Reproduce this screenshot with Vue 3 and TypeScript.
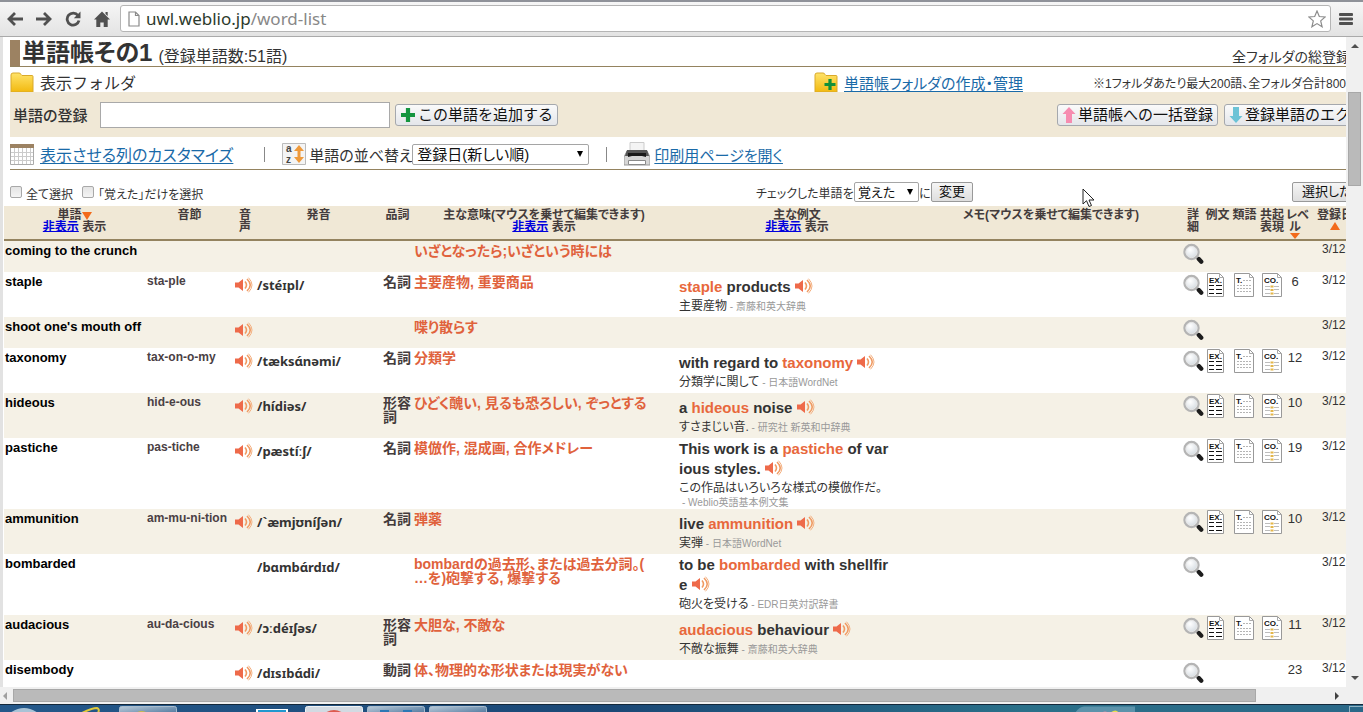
<script setup lang="ts">
import { ref } from 'vue'

interface Part { t: string; hit?: boolean }
interface Entry {
  word: string
  syllables?: string
  sound?: boolean
  pron?: string
  pos?: string[]
  meaning: string[]
  example?: Part[][]
  translation?: string
  source?: string
  sourceBelow?: boolean
  docs?: boolean
  level?: number
}

const date = '3/12'
const newWord = ref('')
const sortOrder = ref('登録日(新しい順)')
const mark = ref('覚えた')

const entries: Entry[] = [
  { word: 'coming to the crunch', meaning: ['いざとなったら;いざという時には'] },
  {
    word: 'staple', syllables: 'sta‐ple', sound: true, pron: '/stéɪpl/', pos: ['名詞'],
    meaning: ['主要産物, 重要商品'],
    example: [[{ t: 'staple', hit: true }, { t: ' products ' }]],
    translation: '主要産物', source: '斎藤和英大辞典', docs: true, level: 6,
  },
  { word: "shoot one's mouth off", sound: true, meaning: ['喋り散らす'] },
  {
    word: 'taxonomy', syllables: 'tax‐on‐o‐my', sound: true, pron: '/tæksɑ́nəmi/', pos: ['名詞'],
    meaning: ['分類学'],
    example: [[{ t: 'with regard to ' }, { t: 'taxonomy', hit: true }, { t: ' ' }]],
    translation: '分類学に関して', source: '日本語WordNet', docs: true, level: 12,
  },
  {
    word: 'hideous', syllables: 'hid‐e‐ous', sound: true, pron: '/hídiəs/', pos: ['形容', '詞'],
    meaning: ['ひどく醜い, 見るも恐ろしい, ぞっとする'],
    example: [[{ t: 'a ' }, { t: 'hideous', hit: true }, { t: ' noise ' }]],
    translation: 'すさまじい音.', source: '研究社 新英和中辞典', docs: true, level: 10,
  },
  {
    word: 'pastiche', syllables: 'pas‐tiche', sound: true, pron: '/pæstíːʃ/', pos: ['名詞'],
    meaning: ['模倣作, 混成画, 合作メドレー'],
    example: [
      [{ t: 'This work is a ' }, { t: 'pastiche', hit: true }, { t: ' of var' }],
      [{ t: 'ious styles. ' }],
    ],
    translation: 'この作品はいろいろな様式の模倣作だ。', source: 'Weblio英語基本例文集', sourceBelow: true,
    docs: true, level: 19,
  },
  {
    word: 'ammunition', syllables: 'am‐mu‐ni‐tion', sound: true, pron: '/`æmjʊníʃən/', pos: ['名詞'],
    meaning: ['弾薬'],
    example: [[{ t: 'live ' }, { t: 'ammunition', hit: true }, { t: ' ' }]],
    translation: '実弾', source: '日本語WordNet', docs: true, level: 10,
  },
  {
    word: 'bombarded', pron: '/bɑmbɑ́rdɪd/',
    meaning: ['bombardの過去形、または過去分詞。(', '…を)砲撃する, 爆撃する'],
    example: [
      [{ t: 'to be ' }, { t: 'bombarded', hit: true }, { t: ' with shellfir' }],
      [{ t: 'e ' }],
    ],
    translation: '砲火を受ける', source: 'EDR日英対訳辞書',
  },
  {
    word: 'audacious', syllables: 'au‐da‐cious', sound: true, pron: '/ɔːdéɪʃəs/', pos: ['形容', '詞'],
    meaning: ['大胆な, 不敵な'],
    example: [[{ t: 'audacious', hit: true }, { t: ' behaviour ' }]],
    translation: '不敵な振舞', source: '斎藤和英大辞典', docs: true, level: 11,
  },
  {
    word: 'disembody', sound: true, pron: '/dɪsɪbɑ́di/', pos: ['動詞'],
    meaning: ['体、物理的な形状または現実がない'], level: 23,
  },
]
</script>

<template>
  <div class="window">
    <svg class="defs" width="0" height="0" aria-hidden="true">
      <defs>
        <radialGradient id="lens" cx="40%" cy="35%" r="65%">
          <stop offset="0" stop-color="#ffffff" />
          <stop offset="1" stop-color="#d3dae0" />
        </radialGradient>
        <linearGradient id="gold" x1="0" y1="0" x2="0" y2="1">
          <stop offset="0" stop-color="#ffe36a" />
          <stop offset="1" stop-color="#f2b90f" />
        </linearGradient>
        <linearGradient id="task" x1="0" y1="0" x2="1" y2="1">
          <stop offset="0" stop-color="#b9cad9" />
          <stop offset="1" stop-color="#416c95" />
        </linearGradient>
        <symbol id="speaker" viewBox="0 0 18 16">
          <path d="M0 5.500h3.500L8 2v12L3.500 10.500H0z" fill="#ee6a4a" />
          <path d="M10 4.500q3 3.500 0 7M12 2q6.500 6 0 12" fill="none" stroke="#f09a62" stroke-width="1.600" />
          <path d="M13.500 .7q7 7.300 0 14.600" fill="none" stroke="#f3b080" stroke-width="1" />
        </symbol>
      </defs>
    </svg>

    <header class="toolbar">
      <button class="nav" aria-label="戻る">
        <svg width="16" height="16" viewBox="0 0 16 16"><path d="M16 8H3M8 2 2 8l6 6" fill="none" stroke="#505050" stroke-width="2.800" /></svg>
      </button>
      <button class="nav" aria-label="進む">
        <svg width="16" height="16" viewBox="0 0 16 16"><path d="M0 8h13M8 2l6 6-6 6" fill="none" stroke="#505050" stroke-width="2.800" /></svg>
      </button>
      <button class="nav" aria-label="再読み込み">
        <svg width="16" height="16" viewBox="0 0 16 16"><path d="M13 4.500A6 6 0 1 0 14 9.500" fill="none" stroke="#505050" stroke-width="2.800" /><path d="M15.500.5v6.700H8.800z" fill="#505050" /></svg>
      </button>
      <button class="nav" aria-label="ホーム">
        <svg width="16" height="16" viewBox="0 0 16 16"><path d="M8 .5 16 8.500h-2.300V16H9.700v-4.500H6.300V16H2.300V8.500H0zM11.500 1h2.200v4l-2.200-2z" fill="#505050" /></svg>
      </button>
      <div class="omnibox">
        <svg width="14" height="16" viewBox="0 0 14 16"><path d="M2 1h6.500L12 4.500V15H2zM8.500 1v3.500H12" fill="#fff" stroke="#8a8a8a" stroke-width="1.200" /></svg>
        <div class="url" role="textbox" aria-label="アドレス" contenteditable="true"><span class="host">uwl.weblio.jp</span><span class="path">/word-list</span></div>
        <button class="star" aria-label="ブックマーク">
          <svg width="18" height="18" viewBox="0 0 18 18"><path d="M9 1l2.300 5.500 5.900.5-4.500 3.900 1.400 5.900L9 13.600l-5.100 3.200 1.400-5.900L.8 7l5.900-.5z" fill="#fff" stroke="#8c8c8c" stroke-width="1.200" /></svg>
        </button>
      </div>
      <button class="menu" aria-label="メニュー">
        <svg width="14" height="14" viewBox="0 0 14 14"><path d="M1 2.500h12M1 7h12M1 11.500h12" stroke="#505050" stroke-width="2.800" stroke-linecap="round" /></svg>
      </button>
    </header>

    <div class="viewport">
      <main class="page">
        <div class="top">
          <div class="title-row">
            <h1>単語帳その1</h1>
            <span class="count">(登録単語数:51語)</span>
            <span class="total">全フォルダの総登録</span>
          </div>

          <div class="folder-row">
            <svg class="folder" width="24" height="20" viewBox="0 0 24 20"><path d="M1 20V3q0-2 2-2h6q1.500 0 2 1.500L12 3.500h10q1 0 1 1V20z" fill="url(#gold)" stroke="#d9a92a" /></svg>
            <span class="folder-name">表示フォルダ</span>
            <span class="folder-admin">
              <svg class="folder" width="24" height="20" viewBox="0 0 24 20"><path d="M1 20V3q0-2 2-2h6q1.500 0 2 1.500L12 3.500h10q1 0 1 1V20z" fill="url(#gold)" stroke="#d9a92a" /><path d="M16 7v11M10.500 12.500h11" stroke="#12903a" stroke-width="3.200" /></svg>
              <a href="#">単語帳フォルダの作成・管理</a>
            </span>
            <span class="limit">※1フォルダあたり最大200語、全フォルダ合計800</span>
          </div>

          <form class="add-row" @submit.prevent>
            <label for="new-word">単語の登録</label>
            <input id="new-word" v-model="newWord" type="text" />
            <button class="btn" type="submit">
              <svg width="16" height="16" viewBox="0 0 16 16"><path d="M8 1v14M1 8h14" stroke="#14953f" stroke-width="4.200" /></svg>
              <span>この単語を追加する</span>
            </button>
            <button class="btn bulk" type="button">
              <svg width="14" height="18" viewBox="0 0 14 18"><path d="M7 1l6.500 7H10v9H4V8H.5z" fill="#f68cb0" /></svg>
              <span>単語帳への一括登録</span>
            </button>
            <div class="cut export">
              <button class="btn" type="button">
                <svg width="14" height="18" viewBox="0 0 14 18"><path d="M7 17l6.500-7H10V1H4v9H.5z" fill="#6cc3d6" /></svg>
                <span>登録単語のエク</span>
              </button>
            </div>
          </form>

          <div class="tool-row">
            <svg width="24" height="21" viewBox="0 0 24 21">
              <path d="M.5.5h23v20H.5z" fill="#fff" stroke="#aaa" />
              <path d="M0 0h24v4H0z" fill="#9c8262" />
              <path d="M4.500 4v16M8.500 4v16M12.500 4v16M16.500 4v16M20.500 4v16M1 8.500h22M1 12.500h22M1 16.500h22" stroke="#cbcbcb" />
            </svg>
            <a class="customize" href="#">表示させる列のカスタマイズ</a>
            <span class="bar"></span>
            <svg class="az" width="24" height="22" viewBox="0 0 24 22">
              <path d="M.5.5h23v21H.5z" fill="#f4f4f4" stroke="#bbb" />
              <text x="4" y="9" class="az-text">a</text>
              <text x="4" y="20" class="az-text">z</text>
              <path d="M17 2l5 6h-3.500v6H22l-5 6-5-6h3.500V8H12z" fill="#ee9a3c" />
            </svg>
            <label for="sort">単語の並べ替え</label>
            <span class="select sort">
              <select id="sort" v-model="sortOrder"><option>登録日(新しい順)</option></select>
              <svg width="8" height="7" viewBox="0 0 8 7"><path d="M1 0h6L4 6z" fill="#000" /></svg>
            </span>
            <span class="bar second"></span>
            <svg class="printer" width="26" height="24" viewBox="0 0 26 24">
              <path d="M6 .5h14V10H6z" fill="#f4f4f4" stroke="#ccc" />
              <path d="M3 9h20l3 6v8H0v-8z" fill="#d6d6d6" stroke="#999" />
              <path d="M3 8h20l2 6H1z" fill="#555" />
              <path d="M4 11h18v4l-4-1H8l-4 1z" fill="#1a1a1a" />
              <path d="M4.500 18.500h17v4h-17z" fill="#fff" stroke="#8a8a8a" />
            </svg>
            <a href="#">印刷用ページを開く</a>
          </div>

          <div class="check-row">
            <input id="all" type="checkbox" /><label for="all">全て選択</label>
            <input id="known" type="checkbox" /><label for="known">「覚えた」だけを選択</label>
            <div class="change">
              <label for="mark">チェックした単語を</label>
              <span class="select mark">
                <select id="mark" v-model="mark"><option>覚えた</option></select>
                <svg width="8" height="7" viewBox="0 0 8 7"><path d="M1 0h6L4 6z" fill="#000" /></svg>
              </span>
              <span class="ni">に</span>
              <button class="small-btn">変更</button>
            </div>
            <div class="cut chosen"><button class="small-btn">選択した</button></div>
          </div>
        </div>

        <table>
          <colgroup>
            <col class="c-word" /><col class="c-syl" /><col class="c-snd" /><col class="c-pron" /><col class="c-pos" />
            <col class="c-mean" /><col class="c-ex" /><col /><col class="c-det" /><col class="c-doc" /><col class="c-doc" />
            <col class="c-co" /><col class="c-lev" /><col class="c-date" />
          </colgroup>
          <thead>
            <tr>
              <th>単語<svg class="tri" width="10" height="8" viewBox="0 0 10 8"><path d="M0 0h10L5 8z" fill="#f26a1b" /></svg><br /><a href="#">非表示</a> 表示</th>
              <th>音節</th>
              <th>音<br />声</th>
              <th>発音</th>
              <th>品詞</th>
              <th>主な意味(マウスを乗せて編集できます)<br /><a href="#">非表示</a> 表示</th>
              <th>主な例文<br /><a href="#">非表示</a> 表示</th>
              <th>メモ(マウスを乗せて編集できます)</th>
              <th>詳<br />細</th>
              <th>例文</th>
              <th>類語</th>
              <th>共起<br />表現</th>
              <th>レベ<br />ル<svg class="below" width="10" height="6" viewBox="0 0 10 6"><path d="M0 0h10L5 6z" fill="#f26a1b" /></svg></th>
              <th>登録日<svg class="below up" width="10" height="8" viewBox="0 0 10 8"><path d="M0 8h10L5 0z" fill="#f26a1b" /></svg></th>
            </tr>
          </thead>
          <tbody>
            <tr v-for="e in entries" :key="e.word">
              <td class="word">{{ e.word }}</td>
              <td class="syl">{{ e.syllables }}</td>
              <td class="snd"><button v-if="e.sound" class="icon" aria-label="発音を聞く"><svg width="18" height="16"><use href="#speaker" /></svg></button></td>
              <td class="pron">{{ e.pron }}</td>
              <td class="pos"><div v-for="p in e.pos" :key="p">{{ p }}</div></td>
              <td class="mean"><div v-for="m in e.meaning" :key="m">{{ m }}</div></td>
              <td class="ex" :class="{ tall: e.example && e.example.length > 1 }">
                <template v-if="e.example">
                  <div v-for="(line, i) in e.example" :key="i" class="en">
                    <span v-for="(p, j) in line" :key="j" :class="{ hit: p.hit }">{{ p.t }}</span>
                    <button v-if="i === e.example.length - 1" class="icon" aria-label="例文を聞く"><svg width="18" height="16"><use href="#speaker" /></svg></button>
                  </div>
                  <div class="ja">{{ e.translation }}<small v-if="!e.sourceBelow"> - {{ e.source }}</small></div>
                  <div v-if="e.sourceBelow" class="src"><small>- {{ e.source }}</small></div>
                </template>
              </td>
              <td></td>
              <td class="det">
                <button class="icon" aria-label="詳細">
                  <svg width="21" height="22" viewBox="0 0 21 22">
                    <path d="M14 14.500l2 2" stroke="#999" stroke-width="3" />
                    <path d="M15.800 16l2.500 2.700" stroke="#1c1c1c" stroke-width="4.200" stroke-linecap="round" />
                    <circle cx="8.500" cy="9" r="7" fill="url(#lens)" stroke="#b4b4b4" stroke-width="2.400" />
                    <circle cx="8.500" cy="9" r="5.600" fill="none" stroke="#e6e6e6" />
                  </svg>
                </button>
              </td>
              <td class="doc ex-doc">
                <button v-if="e.docs" class="icon" aria-label="例文">
                  <svg width="17" height="24" viewBox="0 0 17 24">
                    <path d="M.5.5h12l4 4v19H.5z" fill="#fff" stroke="#999" /><path d="M12.500.5v4h4" fill="none" stroke="#aaa" />
                    <text x="2" y="10" class="doc-text">EX.</text>
                    <path d="M2 12.500h5M9 12.500h6M2 16.500h5M9 16.500h6M2 20.500h5M9 20.500h6" stroke="#111" stroke-width="1.200" />
                  </svg>
                </button>
              </td>
              <td class="doc t-doc">
                <button v-if="e.docs" class="icon" aria-label="類語">
                  <svg width="20" height="24" viewBox="0 0 20 24">
                    <path d="M.5.5h15l4 4v19H.5z" fill="#fff" stroke="#999" /><path d="M15.500.5v4h4" fill="none" stroke="#aaa" />
                    <text x="2" y="10" class="doc-text">T.</text>
                    <path d="M9 7.500h9M3 12.500h14M3 15.500h14M3 18.500h14" stroke="#b5b5b5" stroke-dasharray="2 1" />
                  </svg>
                </button>
              </td>
              <td class="doc co-doc">
                <button v-if="e.docs" class="icon" aria-label="共起表現">
                  <svg width="20" height="24" viewBox="0 0 20 24">
                    <path d="M.5.5h15l4 4v19H.5z" fill="#fff" stroke="#999" /><path d="M15.500.5v4h4" fill="none" stroke="#aaa" />
                    <text x="2" y="10" class="doc-text">CO.</text>
                    <path d="M3 13.500h5M12 13.500h5M3 16.500h5M12 16.500h5M3 20.500h5M12 20.500h5" stroke="#bdbdbd" />
                    <path d="M8.500 13.500h3M8.500 17h3M8.500 20.500h3" stroke="#e3b64a" stroke-width="2" />
                  </svg>
                </button>
              </td>
              <td class="lev">{{ e.level }}</td>
              <td class="date">{{ date }}</td>
            </tr>
          </tbody>
        </table>
        <svg class="pointer" width="13" height="20" viewBox="0 0 13 20"><path d="M1 1v15l3.500-3.300L7 18.500l2.500-1L7 12h5z" fill="#fff" stroke="#222" /></svg>
      </main>
      <div class="vscroll">
        <svg width="8" height="17" viewBox="0 0 8 17"><path d="M0 11h8L4 7z" fill="#505050" /></svg>
        <i class="before"></i><i class="thumb"></i><i class="after"></i>
        <svg width="8" height="17" viewBox="0 0 8 17"><path d="M0 6h8l-4 4z" fill="#505050" /></svg>
      </div>
    </div>

    <div class="hscroll">
      <svg width="13" height="10" viewBox="0 0 13 10"><path d="M7 1v8L3 5z" fill="#a0a0a0" /></svg>
      <i class="thumb"></i><i class="after"></i>
      <svg class="right" width="17" height="10" viewBox="0 0 17 10"><path d="M6 1v8l4-4z" fill="#404040" /></svg>
    </div>

    <footer class="taskbar">
      <svg width="490" height="8" viewBox="0 0 490 8">
        <path d="M10 8q14-10 28 0z" fill="#a9c3d6" />
        <path d="M82 8q10-5 15-5 3 1 1 5" fill="none" stroke="#e0c93c" stroke-width="2" />
        <rect x="119.500" y="1.500" width="57" height="9" rx="2" fill="url(#task)" stroke="#a8bccd" />
        <path d="M136 8q5-4 12 0z" fill="#c7b84c" />
        <path d="M256 4h32v4h-32z" fill="#fff" /><path d="M258 5h28v3h-28z" fill="#2298cf" />
        <rect x="305.500" y="1.500" width="57" height="9" rx="2" fill="#d2dae2" stroke="#eef2f5" />
        <path d="M325 8q9-6 18 0z" fill="#dd5a4e" />
        <rect x="367.500" y="1.500" width="57" height="9" rx="2" fill="url(#task)" stroke="#a8bccd" />
        <path d="M381 8V6h7v2M404 8V6h7v2" fill="none" stroke="#2c78b5" stroke-width="2" />
        <rect x="429.500" y="1.500" width="57" height="9" rx="2" fill="url(#task)" stroke="#a8bccd" />
      </svg>
      <svg width="443" height="8" viewBox="0 0 443 8">
        <path d="M5 7.500h78" stroke="#153f5a" stroke-dasharray="17 3" />
        <path d="M155 8q4-6 9-6.500h51V8z" fill="#5c93ab" />
        <path d="M181 8q4-3 8 0z" fill="#d98fa8" /><path d="M190 8q6-5 9 0z" fill="#e6de4e" />
        <path d="M429.500 1v7M429.500 1.500H443" stroke="#8db3c4" />
      </svg>
    </footer>
  </div>
</template>

<style>
html,
body {
  margin: 0;
  overflow: hidden;
}
</style>

<style scoped>
.window {
  display: flex;
  flex-direction: column;
  height: 100vh;
  overflow: hidden;
  background: #fff;
  color: #333;
  font-family: "Liberation Sans", "Noto Sans CJK JP", sans-serif;
  font-size: 15px;
}
* {
  box-sizing: border-box;
}
.defs {
  position: absolute;
}
svg {
  flex: none;
}
button,
input,
select {
  font: inherit;
  color: #111;
  margin: 0;
}
a {
  color: #1a6aa8;
  text-decoration: underline;
  text-underline-offset: 2px;
}
.toolbar {
  display: flex;
  align-items: center;
  flex: none;
  height: 37px;
  padding: 0 7px 1px 0;
  border-top: 2px solid #8f9299;
  border-bottom: 1px solid #aaa;
  background: linear-gradient(#f6f6f6, #e3e3e3);
}
.nav,
.star,
.menu,
.icon {
  display: flex;
  align-items: center;
  justify-content: center;
  padding: 0;
  border: 0;
  background: none;
}
.nav {
  width: 29px;
}
.omnibox {
  display: flex;
  flex: 1;
  align-items: center;
  gap: 5px;
  height: 27px;
  margin-left: 4px;
  padding: 0 4px 0 6px;
  border: 1px solid #b5b5b5;
  border-radius: 3px;
  background: #fff;
}
.url {
  flex: 1;
  font: 17px/22px "Noto Sans", sans-serif;
  outline: 0;
}
.host {
  color: #2c3a2c;
}
.path {
  color: #888;
}
.menu {
  width: 20px;
  margin-left: 5px;
}
.viewport {
  display: flex;
  flex: 1;
  min-height: 0;
}
.page {
  position: relative;
  flex: 1;
  min-width: 0;
  overflow: hidden;
  padding-left: 1px;
  border-left: 3px solid #e2e2e2;
}
.top {
  padding-left: 6px;
  font-feature-settings: "palt";
  white-space: nowrap;
}
.title-row {
  display: flex;
  align-items: center;
  height: 30px;
  padding-top: 3px;
  border-bottom: 1px solid #94835f;
}
h1 {
  margin: 0;
  padding-left: 2px;
  border-left: 10px solid #9c8262;
  font-size: 24px;
  line-height: 26px;
}
.count {
  padding: 3px 0 0 6px;
  font-size: 16px;
}
.total {
  flex: none;
  width: 114px;
  margin-left: auto;
  padding-top: 6px;
  overflow: hidden;
  font-size: 14px;
}
.folder-row {
  display: flex;
  align-items: center;
  height: 25px;
  padding-top: 5px;
}
.folder {
  align-self: flex-end;
}
.folder-name {
  padding-left: 6px;
  font-feature-settings: "palt" 0;
  font-size: 16px;
}
.folder-admin {
  display: flex;
  align-items: center;
  gap: 6px;
  width: 279px;
  height: 20px;
  margin-left: auto;
}
.limit {
  flex: none;
  width: 253px;
  overflow: hidden;
  font-size: 12px;
}
.add-row {
  display: flex;
  align-items: center;
  height: 45px;
  padding-left: 3px;
  background: #f0e8d6;
}
.add-row label {
  width: 87px;
  font-weight: 500;
}
.add-row input {
  width: 290px;
  height: 26px;
  padding: 0 4px;
  border: 1px solid #a9a9a9;
  background: #fff;
}
.btn {
  display: flex;
  align-items: center;
  gap: 2px;
  height: 22px;
  margin-left: 5px;
  padding: 0 4px;
  border: 1px solid #a5a8ad;
  border-radius: 3px;
  background: linear-gradient(#fafafa, #e4e6ea);
  font-feature-settings: "palt" 0;
  line-height: 20px;
  white-space: nowrap;
}
.bulk {
  margin-left: auto;
}
.cut {
  flex: none;
  overflow: hidden;
}
.export {
  width: 122px;
  margin-left: 6px;
}
.export .btn {
  width: 180px;
  margin-left: 0;
}
.tool-row {
  display: flex;
  align-items: center;
  height: 33px;
  padding-top: 2px;
  border-bottom: 1px solid #94835f;
}
.tool-row a {
  margin-left: 4px;
}
.tool-row .customize {
  margin: 0 31px 0 6px;
  font-size: 16px;
}
.bar {
  width: 1px;
  height: 15px;
  margin-right: 17px;
  background: #888;
}
.bar.second {
  margin-left: 17px;
}
.az {
  margin-right: 3px;
}
.az-text {
  font: bold 10px "Liberation Sans", sans-serif;
  fill: #444;
}
.tool-row label {
  width: 103px;
}
.select {
  position: relative;
  display: flex;
}
.select select {
  width: 100%;
  padding: 0 4px;
  border: 1px solid #a5a5a5;
  border-radius: 2px;
  appearance: none;
  background: #fff;
}
.select svg {
  position: absolute;
  top: 7px;
  right: 5px;
}
.sort {
  width: 177px;
  height: 21px;
}
.mark {
  width: 65px;
  height: 20px;
}
.mark select {
  padding: 0 3px;
  font-size: 13px;
}
.check-row {
  display: flex;
  align-items: center;
  height: 36px;
  padding-top: 8px;
  font-size: 12px;
}
.check-row input {
  width: 12px;
  height: 12px;
  border: 1px solid #a8a8a8;
  border-radius: 2px;
  appearance: none;
  background: linear-gradient(#e4e4e4, #f4f4f4);
}
.check-row > label {
  margin: 3px 9px 0 4px;
}
.change {
  display: flex;
  align-items: center;
  width: 536px;
  margin-left: auto;
}
.change label {
  width: 98px;
}
.ni {
  width: 12px;
  font-size: 12px;
}
.small-btn {
  height: 20px;
  padding: 0 7px;
  border: 1px solid #999;
  border-radius: 2px;
  background: linear-gradient(#f5f5f5, #dedede);
  font-size: 13px;
  line-height: 18px;
}
.chosen {
  width: 54px;
}
.chosen .small-btn {
  width: 120px;
  padding: 0 9px;
  text-align: left;
}
table {
  width: calc(100% + 20px);
  border-collapse: separate;
  border-spacing: 0;
  table-layout: fixed;
}
.c-word { width: 141px; }
.c-syl { width: 89px; }
.c-snd { width: 22px; }
.c-pron { width: 125px; }
.c-pos { width: 33px; }
.c-mean { width: 260px; }
.c-ex { width: 246px; }
.c-det { width: 22px; }
.c-doc { width: 27px; }
.c-co { width: 28px; }
.c-lev { width: 18px; }
.c-date { width: 62px; }
th {
  height: 35px;
  padding: 3px 0 0;
  border-bottom: 2px solid #94835f;
  background: #f0e8d6;
  color: #443c3c;
  font-feature-settings: "palt";
  font-size: 12px;
  line-height: 12px;
  vertical-align: top;
  white-space: nowrap;
}
th a {
  color: #0000dd;
  text-underline-offset: 0;
}
.tri {
  vertical-align: -1px;
}
.below {
  display: block;
  margin: 0 auto;
}
.up {
  margin-top: 1px;
}
td {
  height: 31px;
  padding: 2px 0 0;
  line-height: 16px;
  vertical-align: top;
  white-space: nowrap;
}
tbody tr:nth-child(odd) {
  background: #f5f1e6;
}
.word {
  padding-left: 1px;
  color: #000;
  font-size: 13px;
  font-weight: bold;
}
.syl {
  padding: 1px 0 0 2px;
  font-size: 12px;
  font-weight: bold;
  color: #4a4044;
}
.snd {
  padding: 5px 0 0 1px;
}
.pron {
  padding: 4px 0 0 1px;
  font: bold 13px/18px "Noto Sans", "Open Sans", sans-serif;
}
.pos,
.mean {
  padding-top: 3px;
  font-size: 14px;
  font-weight: bold;
  line-height: 14px;
  color: #443c3c;
}
.pos {
  padding-left: 2px;
}
.mean {
  color: #e0623c;
  font-feature-settings: "palt";
}
.ex {
  padding: 5px 0 2px 5px;
}
.ex.tall {
  padding-top: 1px;
}
.ex:has(.src) {
  padding-bottom: 0;
}
.en {
  height: 20px;
  font-size: 15px;
  font-weight: bold;
  line-height: 20px;
  white-space: pre;
}
.en .icon {
  display: inline-flex;
  height: 16px;
  vertical-align: -2px;
}
.hit {
  color: #e8683c;
}
.ja {
  height: 18px;
  font-size: 12px;
  line-height: 18px;
  font-feature-settings: "palt";
}
small {
  color: #999;
  font-size: 10px;
}
.src {
  height: 12px;
  padding-left: 3px;
  line-height: 12px;
}
.src small {
  display: block;
}
.det {
  padding-left: 1px;
}
.doc {
  padding-top: 1px;
}
.ex-doc {
  padding-left: 3px;
}
.t-doc {
  padding-left: 3px;
}
.co-doc {
  padding-left: 4px;
}
.doc-text {
  font: bold 8px "Liberation Sans", sans-serif;
  fill: #111;
}
.lev {
  font-size: 13px;
  text-align: center;
}
.date {
  padding: 0 0 0 18px;
  font-size: 12px;
}
.pointer {
  position: absolute;
  top: 151px;
  right: 251px;
}
.vscroll {
  display: flex;
  flex: none;
  flex-direction: column;
  align-items: center;
  width: 17px;
  background: #f0f0f0;
}
.vscroll .before { flex: 38; }
.vscroll .thumb {
  flex: 92;
  width: 13px;
}
.vscroll .after { flex: 486; }
.thumb {
  border: 1px solid #a8a8a8;
  background: #bababa;
}
.hscroll {
  display: flex;
  flex: none;
  align-items: center;
  height: 17px;
  background: #f0f0f0;
}
.hscroll .thumb {
  flex: 1242;
  height: 13px;
}
.hscroll .after { flex: 73; }
.hscroll .right {
  margin-right: 17px;
}
.taskbar {
  display: flex;
  flex: none;
  justify-content: space-between;
  height: 8px;
  overflow: hidden;
  border-top: 1px solid #14283a;
  background: linear-gradient(90deg, #24588a, #1b4876 45%, #2a7089 75%, #2a6888);
}
</style>
